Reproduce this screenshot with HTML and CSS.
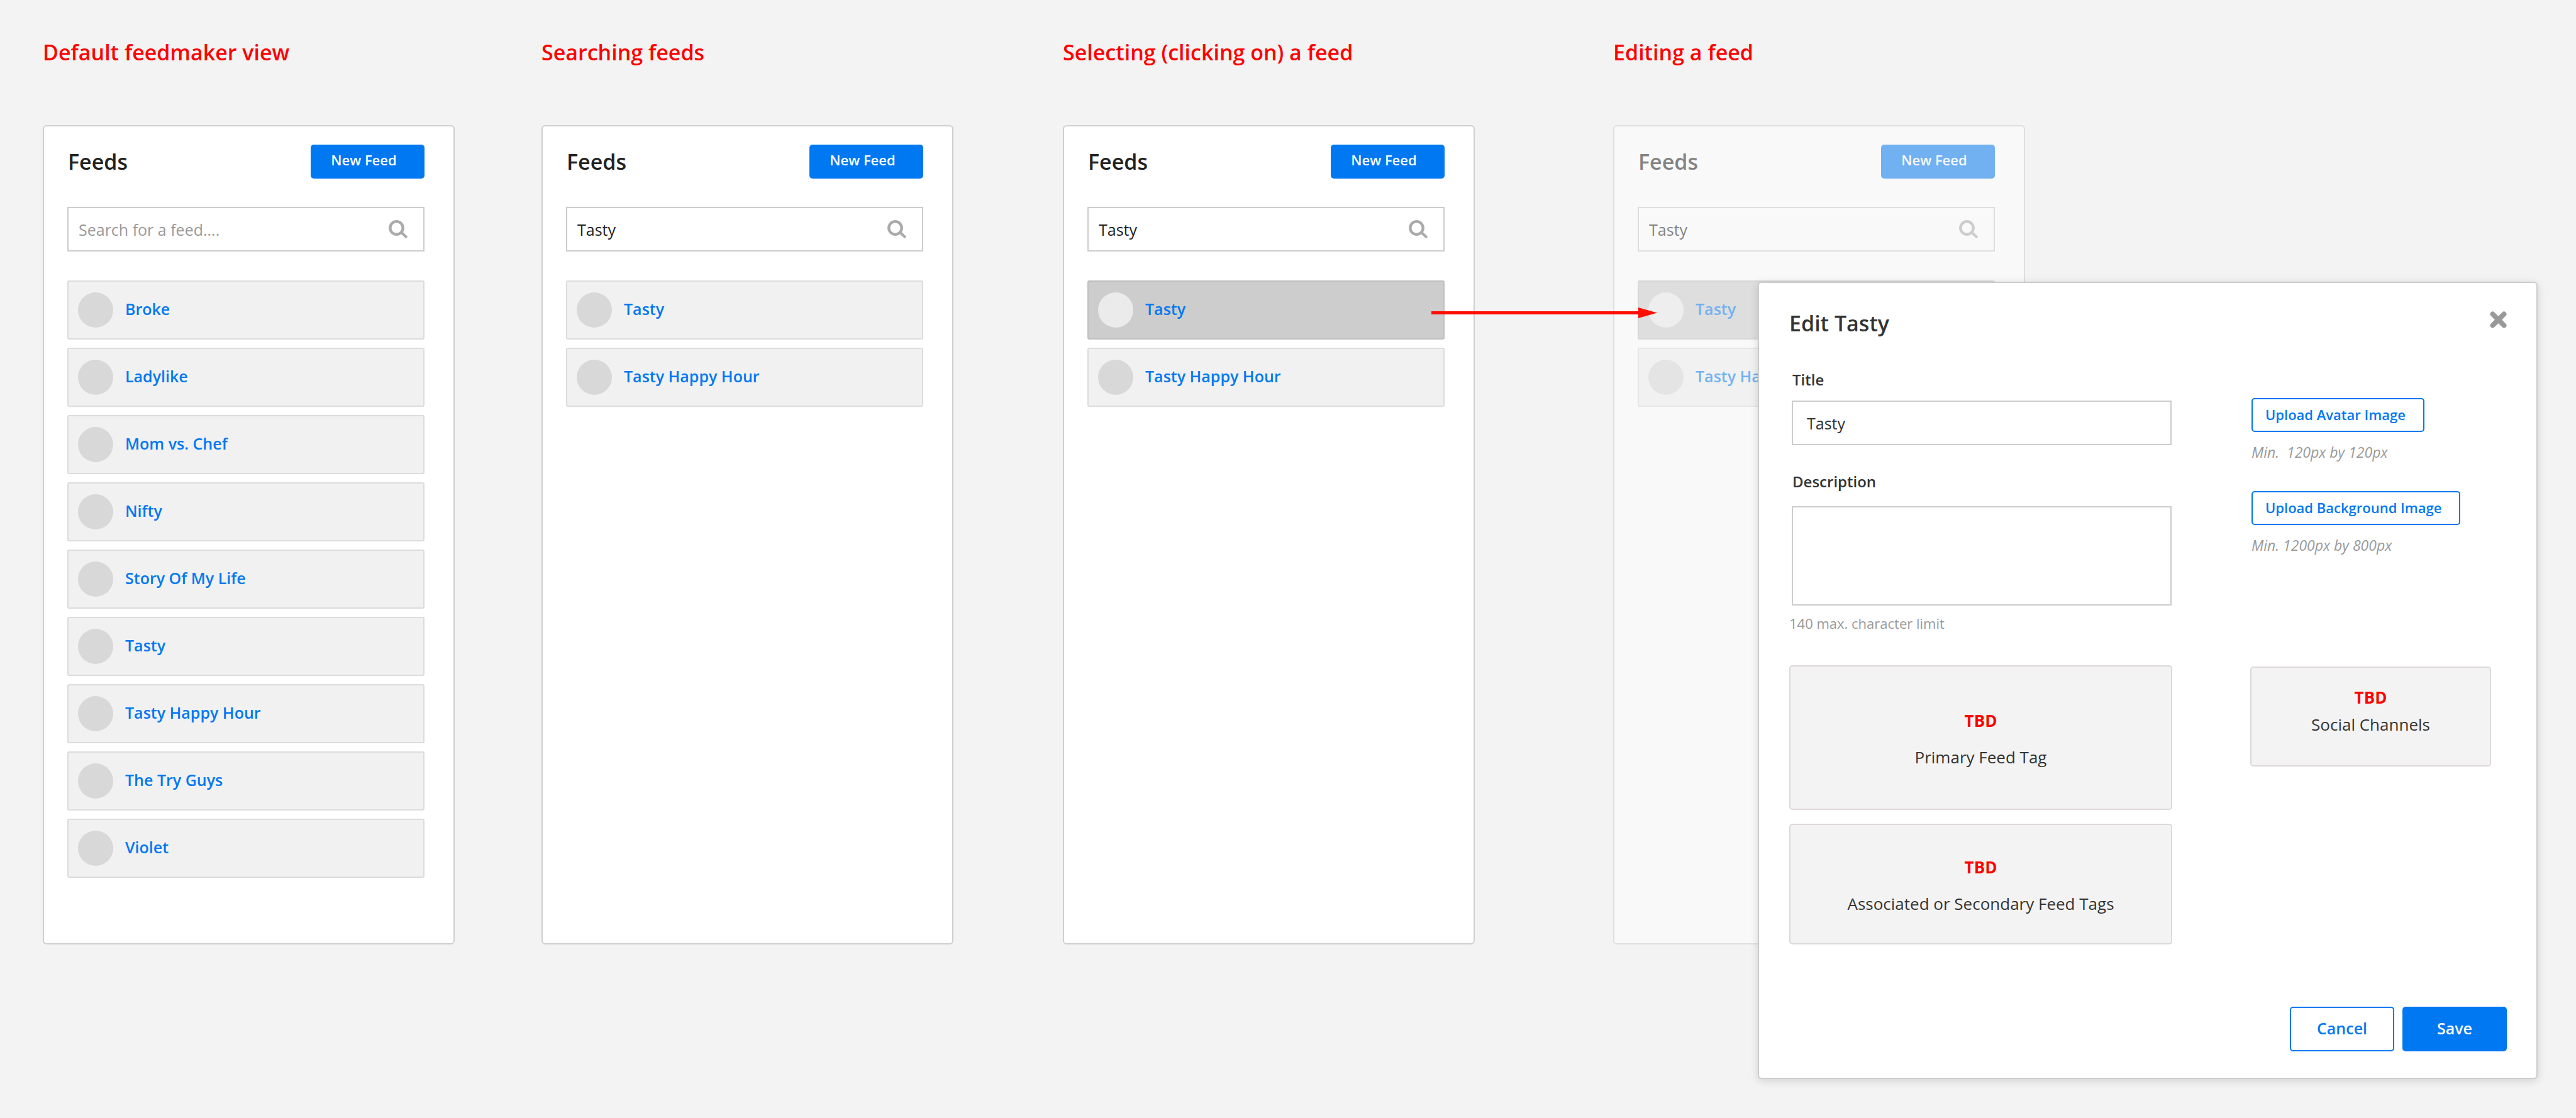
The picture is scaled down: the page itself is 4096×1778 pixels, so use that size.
FILE: index.html
```html
<!DOCTYPE html>
<html lang="en">
<head>
<meta charset="utf-8">
<title>Feedmaker</title>
<link rel="stylesheet" href="styles.css">
</head>
<body>
<svg class="sprite" aria-hidden="true">
  <symbol id="icon-search" viewBox="0 0 30 29">
    <circle cx="12.5" cy="12.5" r="10.2" fill="none" stroke="currentColor" stroke-width="4.4"/>
    <path d="M20 19.500 L27.500 26.500" fill="none" stroke="currentColor" stroke-width="4.4" stroke-linecap="round"/>
  </symbol>
</svg>
<main class="board">
  <h1 class="caption col-1">Default feedmaker view</h1>
  <h1 class="caption col-2">Searching feeds</h1>
  <h1 class="caption col-3">Selecting (clicking on) a feed</h1>
  <h1 class="caption col-4">Editing a feed</h1>

  <section class="panel col-1">
    <header class="panel-head">
      <h2 class="title">Feeds</h2>
      <button class="new-feed" type="button">New Feed</button>
    </header>
    <div class="search">
      <input type="search" aria-label="Search for a feed" placeholder="Search for a feed....">
      <svg class="search-icon" aria-hidden="true"><use href="#icon-search"/></svg>
    </div>
    <ul class="feeds">
      <li><a class="feed" href="#"><span class="avatar"></span><span class="name">Broke</span></a></li>
      <li><a class="feed" href="#"><span class="avatar"></span><span class="name">Ladylike</span></a></li>
      <li><a class="feed" href="#"><span class="avatar"></span><span class="name">Mom vs. Chef</span></a></li>
      <li><a class="feed" href="#"><span class="avatar"></span><span class="name">Nifty</span></a></li>
      <li><a class="feed" href="#"><span class="avatar"></span><span class="name">Story Of My Life</span></a></li>
      <li><a class="feed" href="#"><span class="avatar"></span><span class="name">Tasty</span></a></li>
      <li><a class="feed" href="#"><span class="avatar"></span><span class="name">Tasty Happy Hour</span></a></li>
      <li><a class="feed" href="#"><span class="avatar"></span><span class="name">The Try Guys</span></a></li>
      <li><a class="feed" href="#"><span class="avatar"></span><span class="name">Violet</span></a></li>
    </ul>
  </section>

  <section class="panel col-2">
    <header class="panel-head">
      <h2 class="title">Feeds</h2>
      <button class="new-feed" type="button">New Feed</button>
    </header>
    <div class="search">
      <input type="search" aria-label="Search for a feed" value="Tasty">
      <svg class="search-icon" aria-hidden="true"><use href="#icon-search"/></svg>
    </div>
    <ul class="feeds">
      <li><a class="feed" href="#"><span class="avatar"></span><span class="name">Tasty</span></a></li>
      <li><a class="feed" href="#"><span class="avatar"></span><span class="name">Tasty Happy Hour</span></a></li>
    </ul>
  </section>

  <section class="panel col-3">
    <header class="panel-head">
      <h2 class="title">Feeds</h2>
      <button class="new-feed" type="button">New Feed</button>
    </header>
    <div class="search">
      <input type="search" aria-label="Search for a feed" value="Tasty">
      <svg class="search-icon" aria-hidden="true"><use href="#icon-search"/></svg>
    </div>
    <ul class="feeds">
      <li><a class="feed selected" href="#"><span class="avatar"></span><span class="name">Tasty</span></a></li>
      <li><a class="feed" href="#"><span class="avatar"></span><span class="name">Tasty Happy Hour</span></a></li>
    </ul>
  </section>

  <section class="panel dimmed col-4">
    <header class="panel-head">
      <h2 class="title">Feeds</h2>
      <button class="new-feed" type="button">New Feed</button>
    </header>
    <div class="search">
      <input type="search" aria-label="Search for a feed" value="Tasty">
      <svg class="search-icon" aria-hidden="true"><use href="#icon-search"/></svg>
    </div>
    <ul class="feeds">
      <li><a class="feed selected" href="#"><span class="avatar"></span><span class="name">Tasty</span></a></li>
      <li><a class="feed" href="#"><span class="avatar"></span><span class="name">Tasty Happy Hour</span></a></li>
    </ul>
  </section>

  <div class="arrow" aria-hidden="true">
    <span class="arrow-line"></span>
    <svg class="arrow-head" viewBox="0 0 30 17"><path d="M0 0 L30 8.500 L0 17 Z" fill="currentColor"/></svg>
  </div>

  <form class="modal">
    <header class="modal-head">
      <h2 class="title">Edit Tasty</h2>
      <button class="close" type="button" aria-label="Close">
        <svg viewBox="0 0 27 27"><path d="M4.500 4.500 L22.500 22.500 M22.500 4.500 L4.500 22.500" fill="none" stroke="currentColor" stroke-width="8" stroke-linecap="round"/></svg>
      </button>
    </header>
    <div class="modal-body">
      <div class="fields">
        <label class="label" for="feed-title">Title</label>
        <input class="field" id="feed-title" type="text" value="Tasty">
        <label class="label" for="feed-description">Description</label>
        <textarea class="field" id="feed-description"></textarea>
        <p class="hint">140 max. character limit</p>
      </div>
      <div class="uploads">
        <button class="upload" type="button">Upload Avatar Image</button>
        <p class="hint size">Min.&nbsp; 120px by 120px</p>
        <button class="upload" type="button">Upload Background Image</button>
        <p class="hint size">Min. 1200px by 800px</p>
      </div>
      <div class="tags">
        <div class="slot primary"><strong>TBD</strong><span>Primary Feed Tag</span></div>
        <div class="slot secondary"><strong>TBD</strong><span>Associated or Secondary Feed Tags</span></div>
      </div>
      <div class="slot social"><strong>TBD</strong><span>Social Channels</span></div>
    </div>
    <footer class="modal-foot">
      <button class="action" type="button">Cancel</button>
      <button class="action primary-action" type="button">Save</button>
    </footer>
  </form>
</main>
</body>
</html>
```
FILE: styles.css
```css
* {
  box-sizing: border-box;
}

body {
  margin: 0;
  background: #f3f3f3;
  color: #333;
  font-family: "Open Sans", sans-serif;
  font-size: 25px;
  line-height: 32px;
}

h1, h2, p, ul {
  margin: 0;
  padding: 0;
}

button, input, textarea {
  font: inherit;
  color: inherit;
}

button {
  cursor: pointer;
}

.sprite {
  display: none;
}

/* Board: four screens side by side, the modal lying over the last one */
.board {
  display: grid;
  grid-template-columns:
    [a-start] minmax(0, 655fr) [a-end] minmax(0, 138fr)
    [b-start] minmax(0, 655fr) [b-end] minmax(0, 174fr)
    [c-start] minmax(0, 655fr) [c-end] minmax(0, 220fr)
    [d-start] minmax(0, 230fr) [modal-start] minmax(0, 425fr) [d-end] minmax(0, 815fr) [modal-end];
  grid-template-rows: auto auto 1fr;
  min-height: 100vh;
  padding: 59px 61px 62px 68px;
}

.col-1 { grid-column: a-start / a-end; }
.col-2 { grid-column: b-start / b-end; }
.col-3 { grid-column: c-start / c-end; }
.col-4 { grid-column: d-start / d-end; }

.caption {
  grid-row: 1;
  margin-bottom: 92px;
  color: #f00;
  font-size: 34px;
  font-weight: 600;
  line-height: 48px;
  white-space: nowrap;
}

.title {
  font-size: 34px;
  font-weight: 600;
  line-height: 48px;
}

/* Feed list screens */
.panel {
  grid-row: 2;
  padding: 29px 46px 104px 37px;
  border: 2px solid #cfcfcf;
  border-radius: 6px;
  background: #fff;
  color: #222;
}

.panel.dimmed {
  opacity: 0.53;
}

.panel-head {
  display: flex;
  align-items: center;
  justify-content: space-between;
  margin-bottom: 45px;
  padding-left: 1px;
}

.new-feed {
  width: 181px;
  height: 54px;
  padding: 0 12px 6px 0;
  border: 0;
  border-radius: 5px;
  background: #0078f2;
  color: #fff;
  font-size: 22px;
  font-weight: 600;
}

.search {
  display: flex;
  align-items: center;
  height: 71px;
  margin-bottom: 46px;
  padding: 0 25px 0 16px;
  border: 2px solid #ccc;
  background: #fff;
}

.search input {
  flex: 1;
  min-width: 0;
  padding: 0;
  border: 0;
  outline: 0;
  background: none;
  appearance: none;
}

.search input::placeholder {
  color: #999;
  opacity: 1;
}

.search-icon {
  width: 30px;
  height: 29px;
  color: #aaa;
}

.feeds {
  display: grid;
  gap: 13px;
  list-style: none;
}

.feed {
  display: flex;
  align-items: center;
  gap: 19px;
  height: 94px;
  padding: 0 15px;
  border: 2px solid #dcdcdc;
  border-radius: 3px;
  background: #f1f1f1;
  color: #0078f2;
  font-weight: 600;
  text-decoration: none;
}

.avatar {
  width: 56px;
  height: 56px;
  border-radius: 50%;
  background: #d8d8d8;
}

.name {
  padding-bottom: 4px;
}

.feed.selected {
  border-color: #bfbfbf;
  background: #cdcdcd;
}

.feed.selected .avatar {
  background: #ebebeb;
}

/* Arrow from the selected feed to its edit screen */
.arrow {
  z-index: 1;
  grid-row: 2;
  grid-column: c-end / d-start;
  align-self: start;
  display: flex;
  align-items: center;
  margin: 290px -70px 0 -69px;
  color: #ff0d00;
}

.arrow-line {
  flex: 1;
  height: 5px;
  background: currentColor;
}

.arrow-head {
  width: 30px;
  height: 17px;
}

/* Edit modal */
.modal {
  z-index: 2;
  grid-row: 2 / 4;
  grid-column: modal-start / modal-end;
  align-self: start;
  margin-top: 249px;
  padding: 40px 47px 42px 48px;
  border: 2px solid #ccc;
  border-radius: 6px;
  background: #fff;
  box-shadow: 0 3px 14px rgba(0, 0, 0, 0.14);
}

.modal-head {
  display: flex;
  align-items: flex-start;
  justify-content: space-between;
  margin-bottom: 50px;
}

.close {
  width: 27px;
  height: 27px;
  margin-top: 5px;
  padding: 0;
  border: 0;
  background: none;
  color: #999;
}

.close svg {
  display: block;
}

.modal-body {
  display: grid;
  grid-template-columns: minmax(0, 609fr) minmax(0, 124fr) minmax(0, 383fr) minmax(0, 25fr);
  row-gap: 52px;
}

.fields, .tags {
  grid-column: 1;
}

.uploads, .social {
  grid-column: 3;
}

.label {
  display: block;
  margin-bottom: 17px;
  padding-left: 5px;
  font-size: 24px;
  font-weight: 600;
}

.field {
  display: block;
  width: calc(100% - 5px);
  height: 71px;
  margin: 0 1px 42px 4px;
  padding: 0 22px;
  border: 2px solid #ccc;
  border-radius: 0;
  outline: 0;
  background: #fff;
}

textarea.field {
  height: 158px;
  margin-top: 23px;
  margin-bottom: 13px;
  padding: 16px 22px;
  resize: none;
}

.hint {
  color: #999;
  font-size: 22px;
  line-height: 30px;
}

.uploads {
  display: flex;
  flex-direction: column;
  align-items: flex-start;
  padding: 45px 0 0 2px;
}

.upload {
  height: 54px;
  margin-bottom: 17px;
  padding: 0 28px 3px 20px;
  border: 2px solid #0078f2;
  border-radius: 5px;
  background: #fff;
  color: #0078f2;
  font-size: 22px;
  font-weight: 600;
  white-space: nowrap;
}

.size {
  margin-bottom: 47px;
  font-size: 23px;
  font-style: italic;
}

.tags {
  display: grid;
  gap: 22px;
}

.slot {
  display: flex;
  flex-direction: column;
  align-items: center;
  justify-content: center;
  gap: 29px;
  padding-top: 4px;
  border: 2px solid #ddd8d9;
  border-radius: 5px;
  background: #f3f3f3;
  font-size: 26px;
  line-height: 29px;
}

.slot strong {
  color: #f00;
}

.primary {
  height: 230px;
}

.secondary {
  height: 192px;
}

.social {
  gap: 14px;
  height: 159px;
  margin-top: 2px;
  padding: 0 0 18px;
}

.modal-foot {
  display: flex;
  justify-content: flex-end;
  gap: 13px;
  margin-top: 99px;
}

.action {
  width: 166px;
  height: 71px;
  padding: 0 0 3px;
  border: 2px solid #0078f2;
  border-radius: 5px;
  background: #fff;
  color: #0078f2;
  font-weight: 600;
}

.primary-action {
  background: #0078f2;
  color: #fff;
}
```
